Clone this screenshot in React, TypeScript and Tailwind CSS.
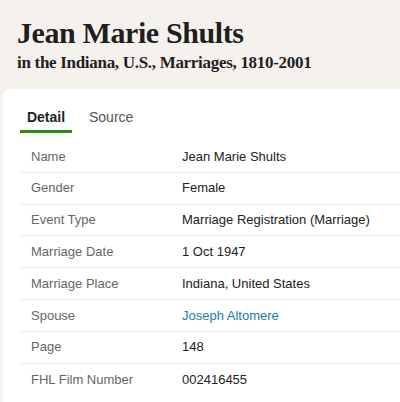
import React from "react";

const rows: { label: string; value: string; link?: boolean }[] = [
  { label: "Name", value: "Jean Marie Shults" },
  { label: "Gender", value: "Female" },
  { label: "Event Type", value: "Marriage Registration (Marriage)" },
  { label: "Marriage Date", value: "1 Oct 1947" },
  { label: "Marriage Place", value: "Indiana, United States" },
  { label: "Spouse", value: "Joseph Altomere", link: true },
  { label: "Page", value: "148" },
  { label: "FHL Film Number", value: "002416455" },
];

export default function App() {
  return (
    <div className="w-[400px] h-[402px] bg-[#f5f2ee] overflow-hidden flex flex-col">
      <div className="h-[89px] pl-[17px] pt-[16px] shrink-0" style={{ fontFamily: '"Liberation Serif", serif' }}>
        <h1 className="text-[30px] leading-[34px] font-bold text-[#1f1f1f] tracking-[-0.4px]">Jean Marie Shults</h1>
        <h2 className="text-[17px] leading-[22px] font-bold text-[#1f1f1f] mt-[2px] tracking-[-0.3px]">in the Indiana, U.S., Marriages, 1810-2001</h2>
      </div>
      <div
        className="flex-1 ml-[3px] bg-white rounded-tl-[6px] pl-[17px] pt-[18px]"
        style={{ fontFamily: '"Liberation Sans", Arial, sans-serif' }}
      >
        <div className="flex items-end h-[26px]">
          <div className="w-[52px] h-full flex flex-col items-center justify-between">
            <span className="text-[14px] leading-[20px] font-bold text-[#222]">Detail</span>
            <span className="block w-full h-[3px] bg-[#2e8b12]" />
          </div>
          <span className="ml-[17px] self-start text-[14px] leading-[20px] text-[#555]">Source</span>
        </div>
        <div className="mt-[8px]">
          {rows.map((r, i) => (
            <div
              key={r.label}
              className={`flex items-center h-[31.8px] text-[13px] ${i < rows.length - 1 ? "border-b border-[#ebebeb]" : ""}`}
            >
              <span className="w-[162px] pl-[11px] text-[#666]">{r.label}</span>
              <span className={r.link ? "text-[#1a7ca6]" : "text-[#222]"}>{r.value}</span>
            </div>
          ))}
        </div>
      </div>
    </div>
  );
}
